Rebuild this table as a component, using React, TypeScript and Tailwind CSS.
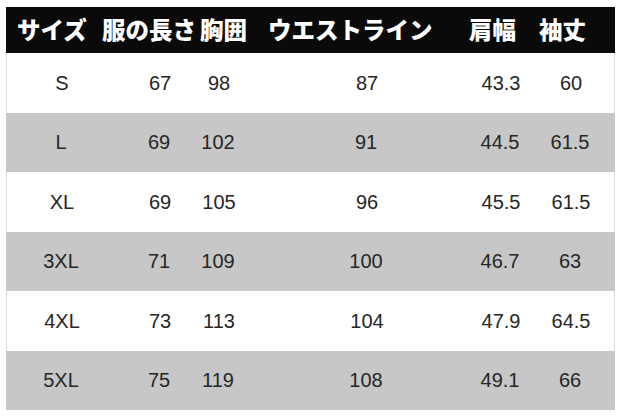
const headers = [
  { label: "サイズ", w: "w-[85px]" },
  { label: "服の長さ", w: "w-[98px]" },
  { label: "胸囲", w: "w-[68px]" },
  { label: "ウエストライン", w: "w-[201px]" },
  { label: "肩幅", w: "w-[70px]" },
  { label: "袖丈", w: "w-[70px]" },
];

const rows = [
  ["S", "67", "98", "87", "43.3", "60"],
  ["L", "69", "102", "91", "44.5", "61.5"],
  ["XL", "69", "105", "96", "45.5", "61.5"],
  ["3XL", "71", "109", "100", "46.7", "63"],
  ["4XL", "73", "113", "104", "47.9", "64.5"],
  ["5XL", "75", "119", "108", "49.1", "66"],
];

// gaps between the fixed 40px data cells, so each value sits under its column
const cellMargins = ["ml-0", "ml-[58px]", "ml-[19px]", "ml-[108px]", "ml-[94px]", "ml-[30px]"];

export default function App() {
  return (
    <div className="w-[628px] h-[417px] bg-white pt-[7px] pl-[6px]">
      <div className="w-[609px]">
        {/* header */}
        <div
          className="h-[46px] bg-[#0a0a0a] flex items-center pl-[11px] text-white font-extrabold text-[23.5px] leading-none"
          style={{ fontFamily: '"Noto Sans CJK JP", "Noto Sans", sans-serif' }}
        >
          {headers.map((h) => (
            <div key={h.label} className={`${h.w} shrink-0 whitespace-nowrap`}>
              {h.label}
            </div>
          ))}
        </div>

        {/* body */}
        {rows.map((r, i) => (
          <div
            key={r[0]}
            className={`h-[59.5px] flex items-center pl-[35px] text-[20px] text-[#262626] ${
              i % 2 === 0 ? "bg-white border-x border-[#dcdcdc]" : "bg-[#c7c7c7]"
            }`}
            style={{ fontFamily: '"Liberation Sans", Arial, sans-serif' }}
          >
            {r.map((v, j) => (
              <div key={j} className={`${cellMargins[j]} w-[40px] shrink-0 flex justify-center whitespace-nowrap`}>
                {v}
              </div>
            ))}
          </div>
        ))}
      </div>
    </div>
  );
}
